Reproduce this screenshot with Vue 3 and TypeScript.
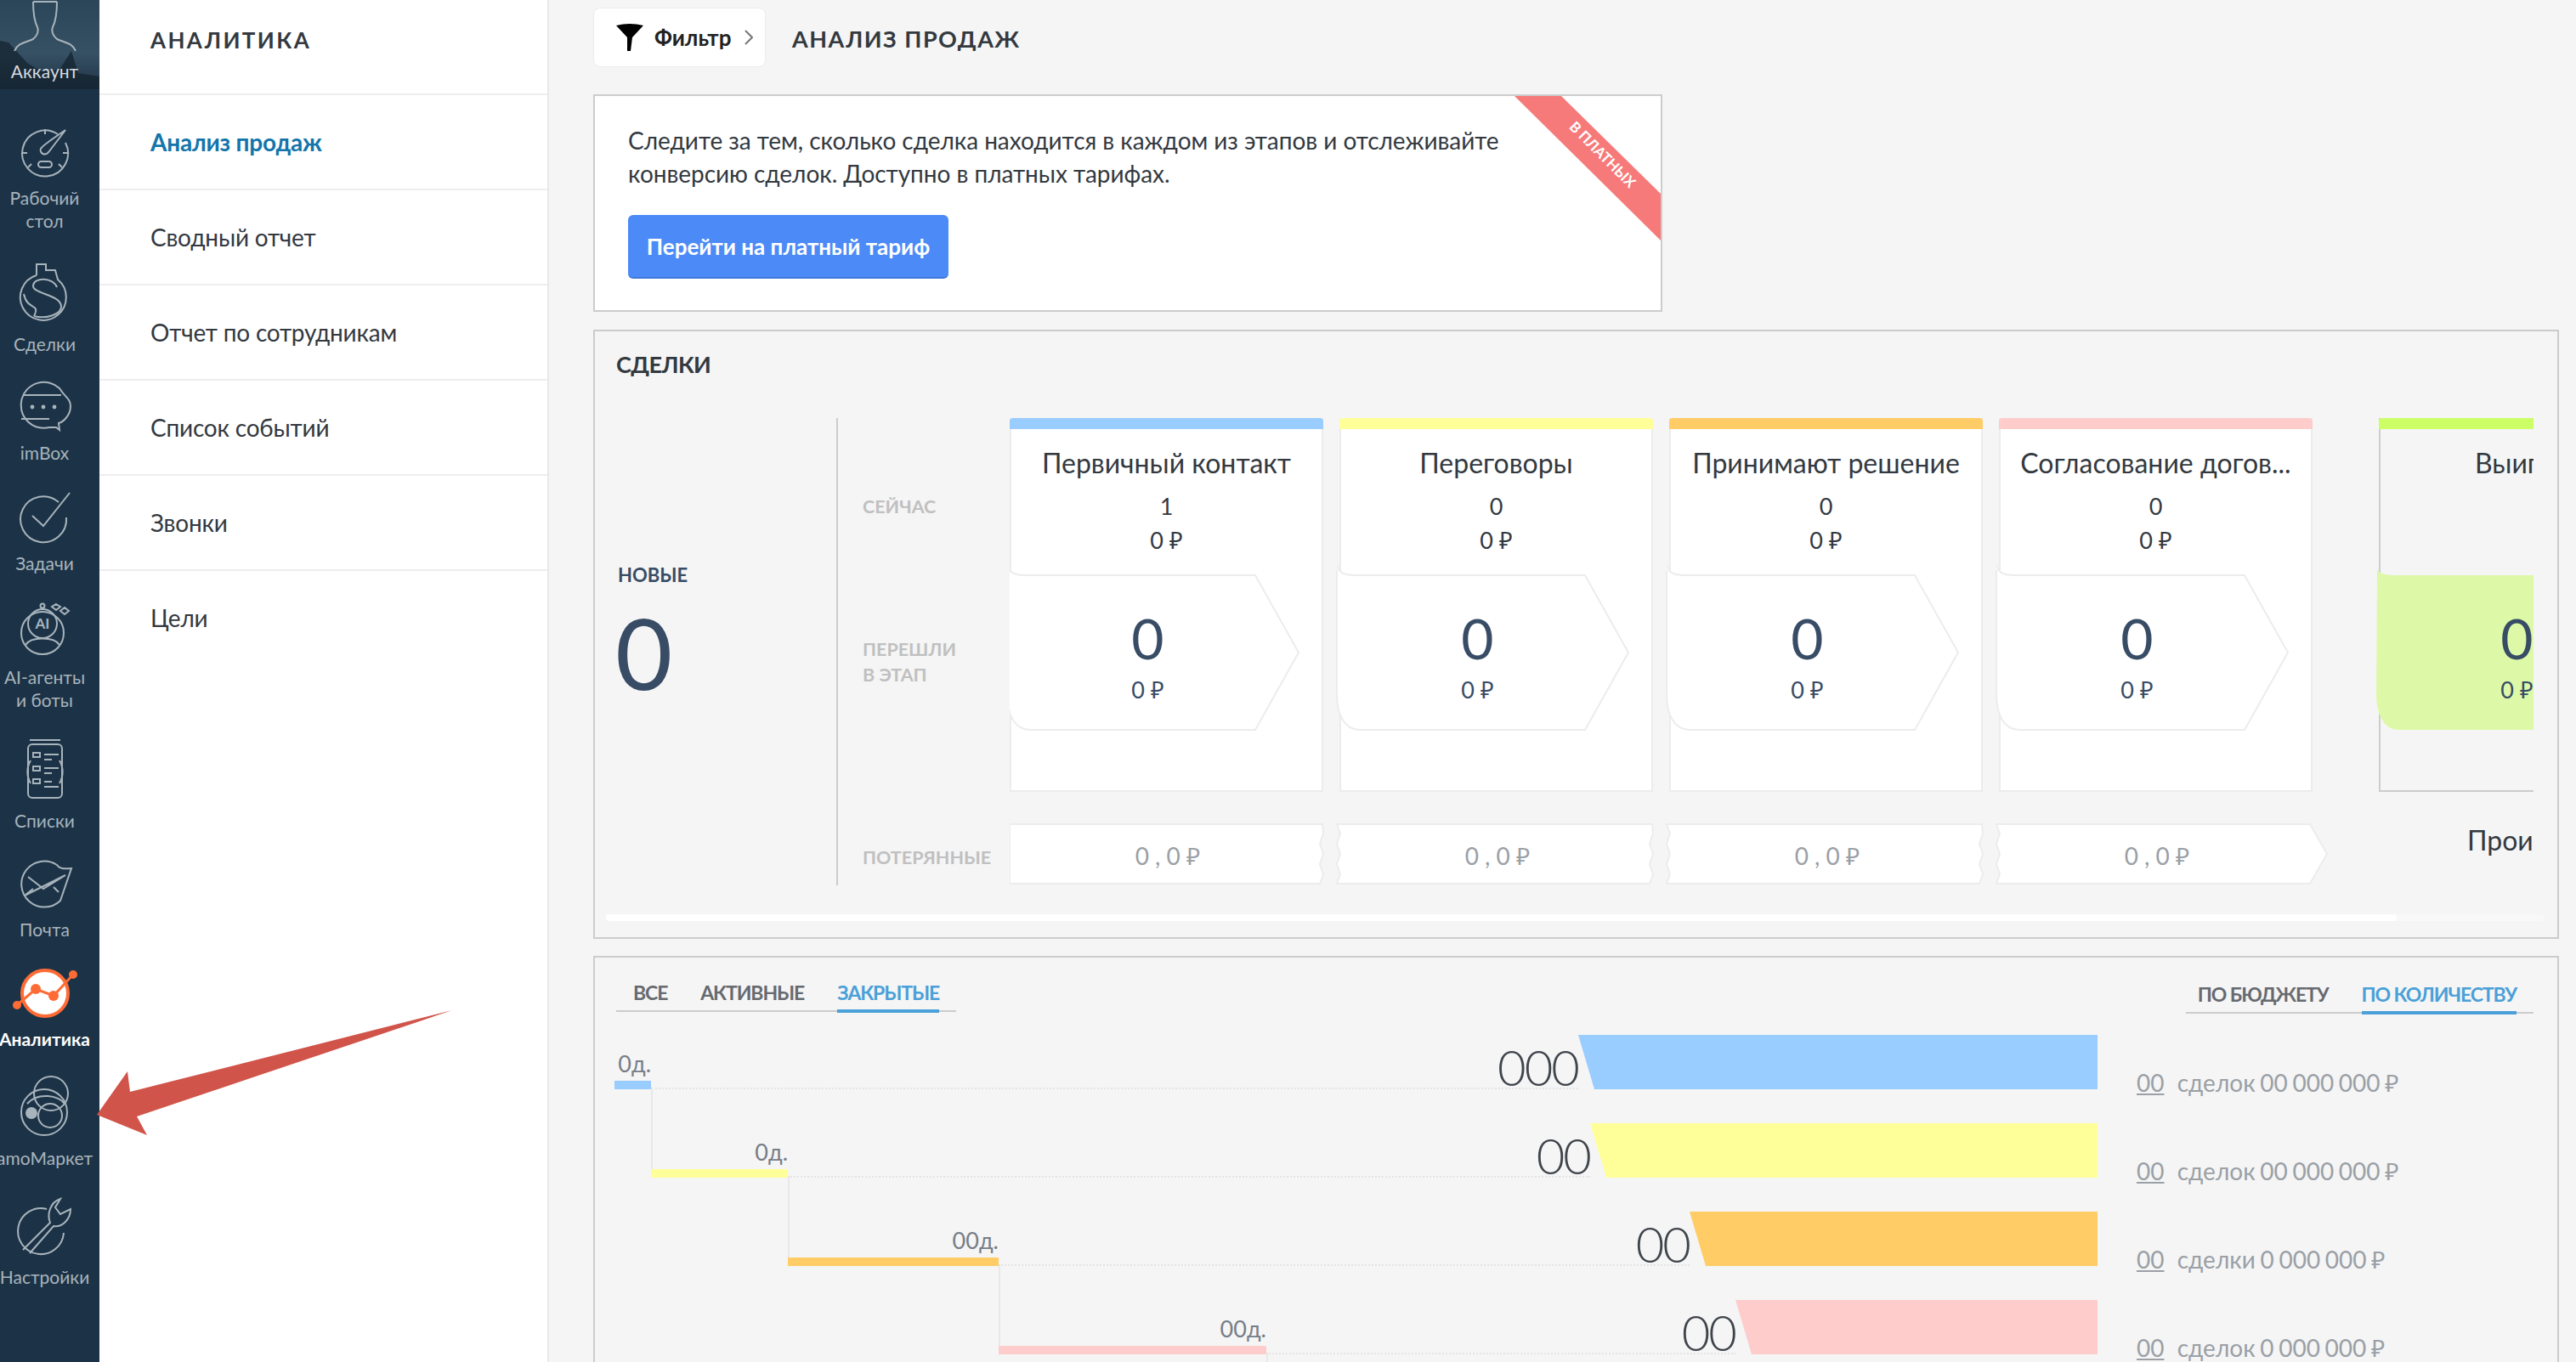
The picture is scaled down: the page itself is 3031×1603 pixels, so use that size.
<script setup lang="ts">
interface Stage {
  title: string
  count: string
  color: string
}

interface FunnelRow {
  days: string
  offset: number
  step: number
  total: string
  trap: number
  color: string
  count: string
  word: string
  sum: string
}

const menu = ['Сводный отчет', 'Отчет по сотрудникам', 'Список событий', 'Звонки', 'Цели']

const stages: Stage[] = [
  { title: 'Первичный контакт', count: '1', color: '#99ccff' },
  { title: 'Переговоры', count: '0', color: '#ffff99' },
  { title: 'Принимают решение', count: '0', color: '#ffcc66' },
  { title: 'Согласование догов...', count: '0', color: '#ffcccc' }
]

const funnel: FunnelRow[] = [
  { days: '0д.', offset: 0, step: 43, total: '000', trap: 611, color: '#99ccff', count: '00', word: 'сделок', sum: '00 000 000 ₽' },
  { days: '0д.', offset: 43, step: 161, total: '00', trap: 597, color: '#ffff99', count: '00', word: 'сделок', sum: '00 000 000 ₽' },
  { days: '00д.', offset: 204, step: 248, total: '00', trap: 480, color: '#ffcc66', count: '00', word: 'сделки', sum: '0 000 000 ₽' },
  { days: '00д.', offset: 452, step: 315, total: '00', trap: 426, color: '#ffcccc', count: '00', word: 'сделок', sum: '0 000 000 ₽' }
]

// волнистый край у блоков "потерянные"
function wave(x: number, down: boolean): string {
  const ys = down ? [12, 24, 36, 48, 60, 71] : [60, 48, 36, 24, 12, 1]
  return ys.map((y, i) => `L${x + (i % 2 === 0 ? 4 : 0)} ${y}`).join(' ')
}

function lostPath(i: number): string {
  const left = i === 0 ? 4 : 1
  if (i === stages.length - 1) {
    return `M${left} 1 H370 L390 36 L370 71 H${left} ${wave(left, false)} Z`
  }
  return `M${left} 1 H372 ${wave(369, true)} H${left} ${i === 0 ? 'V1' : wave(left, false)} Z`
}
</script>

<template>
  <div class="page">
    <aside class="rail">
      <div class="account">
        <svg class="peaks" width="117" height="105" viewBox="0 0 117 105">
          <path d="M0 48 L10 50 L32 74 L48 84 L70 82 L84 60 L92 86 L117 90 V105 H0 Z" fill="#14232f" opacity=".75" />
        </svg>
        <svg class="ico" width="76" height="62" viewBox="0 0 76 62">
          <path d="M24 2 C24 14 25 24 29 32 C31 36 29 42 24 46 C16 50 6 50 2 60 M52 2 C52 14 51 24 47 32 C45 36 47 42 52 46 C60 50 70 50 74 60 M24 2 H52" />
        </svg>
        <span>Аккаунт</span>
      </div>
      <nav class="rail-items">
        <a class="rail-item">
          <svg class="ico" width="58" height="57" viewBox="0 0 58 57">
            <path d="M44 8 A27 27 0 1 0 53 18" />
            <path d="M29 2 V8 M2 30 H8 M50 30 H56 M9 47 L13 43 M45 43 L49 47" />
            <path d="M53 3 L34 28 C29 35 22 30 24 25 C26 21 40 12 53 3 Z" />
            <rect x="21" y="40" width="16" height="7" rx="3.5" />
          </svg>
          <span>Рабочий<br />стол</span>
        </a>
        <a class="rail-item nudge-down">
          <svg class="ico" width="58" height="69" viewBox="0 0 58 69">
            <path d="M19 14 V1 H30 V8 H41 L44 19 A27 27 0 1 1 19 14" />
            <path d="M43 28 C38 16 16 16 15 26 C14 36 46 36 48 50 C49 60 30 66 16 62 M4 36 C8 56 24 46 16 62" />
          </svg>
          <span>Сделки</span>
        </a>
        <a class="rail-item">
          <svg class="ico" width="62" height="56" viewBox="0 0 62 56">
            <path d="M48 6 A27 27 0 1 0 36 52 H44 L48 55 L47 47 C52 46 61 38 61 27 C61 18 54 16 48 6 Z" />
            <path d="M5 14 H50 M3 42 H36" />
            <circle class="dot" cx="16" cy="28" r="2.4" />
            <circle class="dot" cx="29" cy="28" r="2.4" />
            <circle class="dot" cx="42" cy="28" r="2.4" />
          </svg>
          <span>imBox</span>
        </a>
        <a class="rail-item">
          <svg class="ico" width="60" height="58" viewBox="0 0 60 58">
            <path d="M46 12 A27 27 0 1 0 55 30" />
            <path d="M15 28 L28 40 L59 1" />
          </svg>
          <span>Задачи</span>
        </a>
        <a class="rail-item">
          <svg class="ico" width="58" height="62" viewBox="0 0 58 62">
            <circle cx="26" cy="36" r="25" />
            <circle cx="26" cy="25" r="17" />
            <circle cx="26" cy="4" r="2.5" />
            <path d="M6 50 C12 40 40 40 46 50" />
            <path d="M42 2 L47 5 L42 9 L37 5 Z M52 6 L57 10 L52 14 L47 10 Z" />
            <text class="ai" x="26" y="31" text-anchor="middle">AI</text>
          </svg>
          <span>AI-агенты<br />и боты</span>
        </a>
        <a class="rail-item">
          <svg class="ico" width="60" height="70" viewBox="0 0 60 70">
            <path d="M13 25 A27 27 0 0 0 13 52 M47 25 A27 27 0 0 1 47 52" />
            <rect x="10" y="6" width="40" height="63" rx="5" />
            <path d="M12 1 H48" />
            <path d="M16 16 H24 V21 H16 Z M16 32 H24 V37 H16 Z M16 47 H24 V52 H16 Z M29 18 H46 M29 24 H38 M29 34 H46 M29 40 H38 M29 50 H38 M29 56 H46" />
          </svg>
          <span>Списки</span>
        </a>
        <a class="rail-item">
          <svg class="ico" width="64" height="56" viewBox="0 0 64 56">
            <path d="M46 6 A27 27 0 1 0 50 48 L63 10 C58 10 50 12 46 6 Z" />
            <path d="M8 42 L18 34 M12 20 L30 34 L56 18 M8 42 L56 18 M42 32 L48 38" />
          </svg>
          <span>Почта</span>
        </a>
        <a class="rail-item active">
          <svg class="ico" width="78" height="57" viewBox="0 0 78 57">
            <circle cx="39" cy="29" r="27" />
            <path d="M6 43 L28 24 L49 32 L72 7" />
            <circle cx="6" cy="43" r="5" />
            <circle cx="28" cy="24" r="6" />
            <circle cx="49" cy="32" r="6" />
            <circle cx="72" cy="7" r="5" />
          </svg>
          <span>Аналитика</span>
        </a>
        <a class="rail-item nudge-up">
          <svg class="ico" width="58" height="72" viewBox="0 0 58 72">
            <circle cx="28" cy="44" r="27" />
            <circle cx="36" cy="22" r="20" />
            <circle cx="35" cy="48" r="14" />
            <path d="M8 34 C20 20 46 24 52 34" />
            <circle class="dot" cx="13" cy="45" r="7" />
          </svg>
          <span>amoМаркет</span>
        </a>
        <a class="rail-item">
          <svg class="ico" width="64" height="68" viewBox="0 0 64 68">
            <path d="M34 14 A27 27 0 1 0 54 42" />
            <path d="M6 62 L38 30 C34 20 38 6 50 2 L44 12 L50 20 L62 14 C62 26 52 36 42 34 L14 66" />
          </svg>
          <span>Настройки</span>
        </a>
      </nav>
    </aside>

    <section class="side">
      <h2 class="side-title">АНАЛИТИКА</h2>
      <a class="side-link current">Анализ продаж</a>
      <a v-for="item in menu" :key="item" class="side-link">{{ item }}</a>
    </section>

    <main class="main">
      <header class="top">
        <button class="filter">
          <svg width="32" height="32" viewBox="0 0 32 32"><path d="M0 2 Q16 -2 32 2 L19 16 L17 32 L13 32 L13 16 Z" fill="#000" /></svg>
          <b>Фильтр</b>
          <svg class="chev" width="10" height="20" viewBox="0 0 10 20"><path d="M1 2 L9 10 L1 18" /></svg>
        </button>
        <h1>АНАЛИЗ ПРОДАЖ</h1>
      </header>

      <div class="promo">
        <p>Следите за тем, сколько сделка находится в каждом из этапов и отслеживайте<br />конверсию сделок. Доступно в платных тарифах.</p>
        <button class="pay">Перейти на платный тариф</button>
        <div class="ribbon"></div>
        <span class="ribbon-text">В ПЛАТНЫХ</span>
      </div>

      <div class="panel deals">
        <h3>СДЕЛКИ</h3>
        <div class="deals-body">
          <div class="news">
            <b>НОВЫЕ</b>
            <div class="news-num">0</div>
          </div>
          <div class="labels">
            <span class="lb-now">СЕЙЧАС</span>
            <span class="lb-moved">ПЕРЕШЛИ<br />В ЭТАП</span>
            <span class="lb-lost">ПОТЕРЯННЫЕ</span>
          </div>
          <div class="stages">
            <div v-for="(s, i) in stages" :key="s.title" class="stage">
              <div class="card">
                <div class="stripe" :style="{ background: s.color }"></div>
                <div class="st-title">{{ s.title }}</div>
                <div class="st-num">{{ s.count }}</div>
                <div class="st-sum">0 ₽</div>
                <div class="arrow">
                  <svg width="346" height="200" viewBox="0 -14 346 200">
                    <path d="M2 -12 C2 -4 8 0 22 0 H293 L344 91 L293 182 H28 C10 182 1 164 1 140 V-6" fill="#fff" stroke="#ececec" stroke-width="2" />
                  </svg>
                  <div class="ar-num">0</div>
                  <div class="ar-sum">0 ₽</div>
                </div>
              </div>
              <div class="lost">
                <svg width="392" height="72" viewBox="0 0 392 72">
                  <path :d="lostPath(i)" fill="#fff" stroke="#ececec" stroke-width="2" />
                </svg>
                <span>0 , 0 ₽</span>
              </div>
            </div>
            <div class="stage won">
              <div class="card">
                <div class="stripe won-stripe"></div>
                <div class="st-title">Выиграно</div>
                <div class="st-num">&nbsp;</div>
                <div class="st-sum">&nbsp;</div>
                <div class="arrow">
                  <svg width="346" height="200" viewBox="0 -14 346 200">
                    <path d="M2 -8 C3 -3 10 0 22 0 H293 L344 91 L293 182 H28 C10 182 1 164 1 140 Z" fill="#ddf9a8" />
                  </svg>
                  <div class="ar-num">0</div>
                  <div class="ar-sum">0 ₽</div>
                </div>
              </div>
              <div class="lost-title">Проиграно</div>
            </div>
          </div>
        </div>
        <div class="scroll"><div class="thumb"></div></div>
      </div>

      <div class="panel chart">
        <div class="tabs">
          <div class="tab-group first">
            <span>ВСЕ</span>
            <span>АКТИВНЫЕ</span>
            <span class="on">ЗАКРЫТЫЕ</span>
          </div>
          <div class="tab-group second">
            <span>ПО БЮДЖЕТУ</span>
            <span class="on">ПО КОЛИЧЕСТВУ</span>
          </div>
        </div>
        <div class="rows">
          <div v-for="r in funnel" :key="r.trap" class="row">
            <div class="step" :style="{ marginLeft: r.offset + 'px', width: r.step + 'px' }">
              <span>{{ r.days }}</span>
              <i :style="{ background: r.color }"></i>
            </div>
            <div class="track">{{ r.total }}</div>
            <div class="trap" :style="{ width: r.trap + 'px', background: r.color }"></div>
            <div class="info"><u>{{ r.count }}</u> <span>{{ r.word }} {{ r.sum }}</span></div>
          </div>
        </div>
      </div>
    </main>

    <svg class="pointer" width="440" height="160" viewBox="110 1185 440 160">
      <path d="M114 1312 L150 1261 L153 1285 L532 1189 L161 1314 L173 1336 Z" fill="#d0544a" />
    </svg>
  </div>
</template>

<style>
html,
body {
  margin: 0;
  background: #f5f5f5;
}
</style>

<style scoped>
.page {
  position: relative;
  display: flex;
  width: 3031px;
  height: 1603px;
  overflow: hidden;
  background: #f5f5f5;
  color: #33393f;
  font-family: "Lato", "Noto Sans", sans-serif;
}

/* левая тёмная колонка */
.rail {
  flex: none;
  width: 117px;
  overflow: hidden;
  background: #1c3347;
  color: #a8b4bc;
  font-size: 21px;
  line-height: 27px;
  text-align: center;
}

.account {
  position: relative;
  display: flex;
  flex-direction: column;
  align-items: center;
  height: 105px;
  padding-right: 12px;
  box-sizing: border-box;
  overflow: hidden;
  background: linear-gradient(180deg, #2c4659 0%, #365064 60%, #1f3444 100%);
  color: #d5dce0;
}

.account .ico,
.account span {
  position: relative;
}

.account span {
  margin-top: 8px;
}

.peaks {
  position: absolute;
  left: 0;
  top: 0;
}

.rail-items {
  display: flex;
  flex-direction: column;
  gap: 33px;
  padding: 45px 12px 0 0;
}

.rail-item {
  display: flex;
  flex-direction: column;
  align-items: center;
  gap: 12px;
  white-space: nowrap;
}

.rail-item.nudge-down {
  margin-top: 4px;
}

.rail-item.nudge-up {
  margin-top: -4px;
}

.rail-item.active {
  color: #fff;
  font-weight: 700;
}

.ico {
  flex: none;
  overflow: visible;
}

.ico path,
.ico circle,
.ico rect {
  fill: none;
  stroke: #a8b4bc;
  stroke-width: 2;
}

.ico .dot {
  fill: #a8b4bc;
  stroke: none;
}

.ico .ai {
  fill: #a8b4bc;
  font-size: 17px;
  font-weight: 700;
}

.active .ico path {
  stroke: #ff6b35;
  stroke-width: 3;
}

.active .ico circle {
  fill: #ff6b35;
  stroke: none;
}

.active .ico circle:first-child {
  fill: #fff;
  stroke: #ff6b35;
  stroke-width: 4;
}

/* меню раздела */
.side {
  flex: none;
  width: 529px;
  background: #fff;
  border-right: 2px solid #e8e8e8;
  box-sizing: border-box;
}

.side-title {
  margin: 0;
  height: 112px;
  padding-left: 60px;
  font-size: 26px;
  font-weight: 700;
  line-height: 94px;
  letter-spacing: 2.4px;
  color: #33393f;
  box-sizing: border-box;
  border-bottom: 2px solid #eee;
}

.side-link {
  display: block;
  height: 112px;
  padding-left: 60px;
  font-size: 28px;
  line-height: 110px;
  letter-spacing: -0.2px;
  box-sizing: border-box;
  border-bottom: 2px solid #eee;
}

.side-link:last-child {
  border-bottom: none;
}

.side-link.current {
  color: #1375ab;
  font-weight: 700;
}

/* контент */
.main {
  flex: none;
  width: 2312px;
  padding: 9px 0 0 52px;
  box-sizing: border-box;
}

.top {
  display: flex;
  align-items: center;
  height: 70px;
}

.filter {
  display: flex;
  align-items: center;
  width: 203px;
  height: 70px;
  padding: 0 0 0 26px;
  background: #fff;
  border: 1px solid #ececec;
  border-radius: 8px;
  font: inherit;
  font-size: 26px;
  color: #222;
}

.filter b {
  margin-left: 13px;
}

.chev {
  margin-left: 16px;
  fill: none;
  stroke: #777;
  stroke-width: 2;
}

.top h1 {
  margin: 2px 0 0 31px;
  font-size: 27px;
  font-weight: 700;
  letter-spacing: 1.5px;
}

.promo {
  position: relative;
  width: 1258px;
  height: 256px;
  margin-top: 32px;
  padding: 33px 0 0 39px;
  background: #fff;
  border: 2px solid #ccc;
  box-sizing: border-box;
  overflow: hidden;
}

.promo p {
  margin: 0;
  font-size: 28px;
  line-height: 39px;
  letter-spacing: -0.05px;
}

.pay {
  display: block;
  width: 377px;
  height: 75px;
  margin-top: 29px;
  padding: 0;
  background: #4c8bf7;
  border: none;
  border-bottom: 2px solid #3f78db;
  border-radius: 6px;
  color: #fff;
  font: inherit;
  font-size: 26px;
  font-weight: 700;
}

.ribbon {
  position: absolute;
  right: 0;
  top: 0;
  width: 172px;
  height: 170px;
  background: #f67a7a;
  clip-path: polygon(0 0, 55px 0, 100% 115px, 100% 100%);
}

.ribbon-text {
  position: absolute;
  right: 8px;
  top: 58px;
  width: 120px;
  transform: rotate(45deg);
  color: #fff;
  font-size: 17px;
  font-weight: 700;
  text-align: center;
  white-space: nowrap;
}

.panel {
  width: 2313px;
  border: 2px solid #ccc;
  box-sizing: border-box;
}

.deals {
  height: 717px;
  margin-top: 21px;
}

.deals h3 {
  margin: 0;
  padding: 22px 0 0 25px;
  font-size: 27px;
  font-weight: 700;
  line-height: 34px;
  letter-spacing: -0.6px;
}

.deals-body {
  display: flex;
  margin-top: 46px;
  margin-right: 28px;
}

.news {
  flex: none;
  width: 284px;
  padding: 170px 0 0 27px;
  box-sizing: border-box;
}

.news b {
  display: block;
  font-size: 22px;
  line-height: 30px;
  color: #384c66;
}

.news-num {
  margin: 9px 0 0 -3px;
  font-size: 116px;
  line-height: 134px;
  color: #384c66;
}

.labels {
  flex: none;
  position: relative;
  width: 204px;
  height: 550px;
  border-left: 2px solid #ccc;
  box-sizing: border-box;
  padding-left: 29px;
  color: #c0c0c0;
  font-size: 21.5px;
  font-weight: 700;
  line-height: 30px;
}

.labels span {
  display: block;
}

.lb-now {
  margin-top: 89px;
}

.lb-moved {
  margin-top: 138px;
}

.lb-lost {
  margin-top: 185px;
}

.stages {
  display: flex;
  gap: 19px;
  flex: 1;
  min-width: 0;
  overflow: hidden;
}

.stage {
  flex: none;
  width: 369px;
}

.card {
  position: relative;
  height: 440px;
  padding-left: 0;
  background: #fff;
  border: solid #ececec;
  border-width: 0 2px 2px;
  box-sizing: border-box;
  text-align: center;
}

.stripe {
  height: 13px;
  margin: 0 -2px;
  border-radius: 4px 4px 0 0;
}

.st-title {
  margin-top: 20px;
  font-size: 32px;
  line-height: 40px;
  white-space: nowrap;
}

.st-num {
  margin-top: 11px;
  font-size: 27px;
  line-height: 40px;
}

.st-sum {
  font-size: 27px;
  line-height: 40px;
}

.arrow {
  position: relative;
  width: 346px;
  height: 183px;
  margin: 21px 0 0 -6px;
}

.arrow svg {
  position: absolute;
  left: 0;
  top: -14px;
}

.ar-num {
  position: relative;
  width: 333px;
  padding-top: 34px;
  font-size: 66px;
  line-height: 80px;
  color: #384c66;
}

.ar-sum {
  position: relative;
  width: 333px;
  margin-top: 3px;
  font-size: 27px;
  line-height: 36px;
  color: #384c66;
}

.lost {
  position: relative;
  width: 392px;
  height: 72px;
  margin: 37px 0 0 -4px;
  line-height: 76px;
  text-align: center;
  color: #9aa0a6;
  font-size: 28px;
}

.lost svg {
  position: absolute;
  left: 0;
  top: 0;
}

.lost span {
  position: relative;
  display: block;
  width: 380px;
}

.stage.won {
  margin-left: 59px;
}

.won .card {
  background: transparent;
  border-color: #ccc;
  border-width: 0 0 2px 2px;
}

.won-stripe {
  background: #ccff66;
}

.lost-title {
  margin-top: 37px;
  font-size: 32px;
  line-height: 40px;
  text-align: center;
}

.scroll {
  height: 8px;
  margin: 34px 15px 0 13px;
  background: #f8f8f8;
  border-radius: 4px;
}

.thumb {
  width: 2107px;
  height: 8px;
  background: #fff;
  border-radius: 4px;
}

.chart {
  height: 520px;
  margin-top: 20px;
  border-bottom: none;
  padding-left: 23px;
}

.tabs {
  display: flex;
  justify-content: space-between;
  padding: 27px 28px 0 2px;
  align-items: flex-start;
}

.tab-group {
  display: flex;
  gap: 39px;
  padding-left: 20px;
  box-sizing: border-box;
  border-bottom: 2px solid #ccc;
  font-size: 23px;
  font-weight: 700;
  line-height: 28px;
  letter-spacing: -1.1px;
  color: #666a70;
}

.tab-group span {
  position: relative;
  padding-bottom: 6px;
  margin-bottom: -2px;
  white-space: nowrap;
}

.tab-group.first {
  width: 400px;
}

.tab-group.second {
  justify-content: flex-end;
  width: 409px;
  margin-top: 2px;
  padding-right: 20px;
}

.tab-group .on {
  color: #4aa0d8;
  border-bottom: 4px solid #4aa0d8;
  margin-bottom: -3px;
}

.rows {
  display: flex;
  flex-direction: column;
  gap: 40px;
  margin-top: 25px;
  padding-right: 20px;
}

.row {
  display: flex;
  align-items: flex-end;
  height: 64px;
}

.step {
  flex: none;
  position: relative;
  text-align: right;
  font-size: 27px;
  line-height: 34px;
  color: #777e88;
}

.step span {
  display: block;
  margin-bottom: 3px;
  white-space: nowrap;
}

.step i {
  display: block;
  height: 10px;
}

.step::after {
  content: "";
  position: absolute;
  left: 100%;
  top: 100%;
  width: 2px;
  height: 94px;
  background: #e8e8e8;
}

.track {
  flex: 1;
  height: 64px;
  border-bottom: 2px dotted #e4e4e4;
  box-sizing: border-box;
  text-align: right;
  font-size: 58px;
  font-weight: 300;
  line-height: 76px;
  letter-spacing: -2px;
  color: #40454c;
}

.trap {
  flex: none;
  height: 64px;
  clip-path: polygon(0 0, 100% 0, 100% 100%, 19px 100%);
}

.info {
  flex: none;
  width: 475px;
  margin: 0 0 -6px 46px;
  font-size: 28px;
  line-height: 28px;
  color: #9aa0a6;
  white-space: pre;
}

.info span {
  margin-left: 8px;
  word-spacing: -1.5px;
}

.pointer {
  position: absolute;
  left: 110px;
  top: 1185px;
}
</style>
